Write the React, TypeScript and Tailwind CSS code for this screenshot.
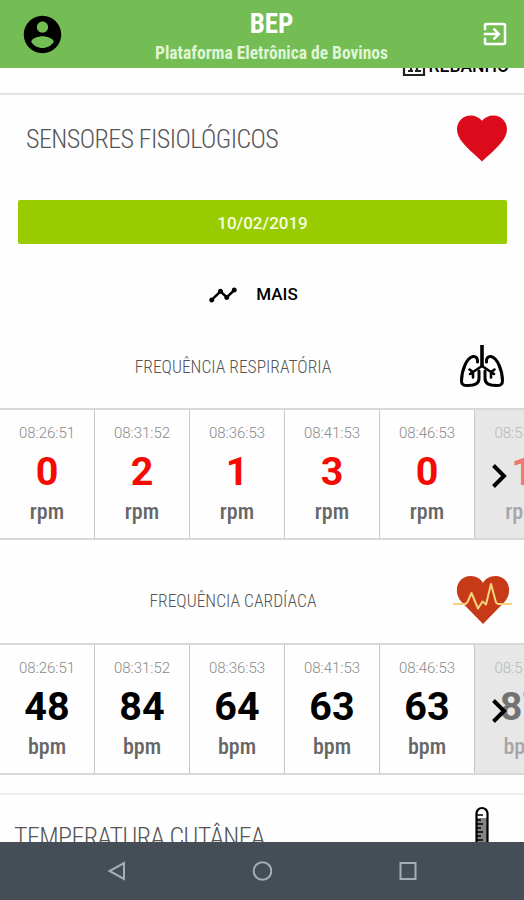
import * as React from 'react';
import { MdExitToApp, MdFavorite, MdTimeline } from 'react-icons/md';

interface Reading {
	time: string;
	value: number;
}

interface ReadingStripProps {
	readings: Reading[];
	unit: string;
	valueClass: string;
}

const respiratory: Reading[] = [
	{ time: '08:26:51', value: 0 },
	{ time: '08:31:52', value: 2 },
	{ time: '08:36:53', value: 1 },
	{ time: '08:41:53', value: 3 },
	{ time: '08:46:53', value: 0 },
	{ time: '08:51:54', value: 1 }
];

const cardiac: Reading[] = [
	{ time: '08:26:51', value: 48 },
	{ time: '08:31:52', value: 84 },
	{ time: '08:36:53', value: 64 },
	{ time: '08:41:53', value: 63 },
	{ time: '08:46:53', value: 63 },
	{ time: '08:51:54', value: 87 }
];

function AccountIcon() {
	return (
		<svg viewBox="0 0 24 24" className="size-[45px] text-black" fill="currentColor">
			<path d="M12 2C6.480 2 2 6.480 2 12s4.480 10 10 10 10-4.480 10-10S17.520 2 12 2zm0 3c1.660 0 3 1.340 3 3s-1.340 3-3 3-3-1.340-3-3 1.340-3 3-3zm0 14.200c-2.500 0-4.710-1.280-6-3.220.03-1.990 4-3.080 6-3.080 1.990 0 5.970 1.090 6 3.080-1.290 1.940-3.500 3.220-6 3.220z" />
		</svg>
	);
}

function LungsIcon() {
	return (
		<svg viewBox="0 0 46 44" className="h-11 w-[46px]" fill="none" stroke="#000" strokeWidth="3" strokeLinecap="round" strokeLinejoin="round">
			<path d="M23 1v21" strokeWidth="3.600" strokeLinecap="butt" />
			<path d="M23 22l-12 8M23 22l12 8M14 28v5.500M14 28l-3.500-2.500M32 28v5.500M32 28l3.500-2.500" strokeWidth="2.600" />
			<path d="M18.500 18c.5-3.500-1.500-6-4.500-5.500C8 13.500 2.500 26 2.500 37c0 4 2.500 4.500 6 4.500 7 0 11.500-2 11.500-7V27" />
			<path d="M27.500 18c-.5-3.500 1.500-6 4.500-5.500C38 13.500 43.500 26 43.500 37c0 4-2.500 4.500-6 4.500-7 0-11.500-2-11.500-7V27" />
		</svg>
	);
}

function HeartRateIcon() {
	return (
		<svg viewBox="0 0 60 52" className="h-[52px] w-[60px]" fill="none">
			<path d="M30 50L8.500 28C-1 17 5 2 17.500 2 23.500 2 28 5 30 9c2-4 6.500-7 12.500-7C55 2 61 17 51.500 28z" fill="#c73a17" />
			<path d="M0 30h12.500l2-2 4-9 6.500 15.500 4.500-7 3.500 3L38 10l5 18.500 2 1.500h14" stroke="#f5d27c" strokeWidth="2" strokeLinejoin="round" />
		</svg>
	);
}

function ThermometerIcon() {
	return (
		<svg viewBox="0 0 16 46" className="h-[46px] w-4" fill="none" stroke="#000" strokeWidth="2.200">
			<path d="M3 12h10v33H3z" fill="#858585" stroke="none" />
			<path d="M2.500 45V7.500a5.500 5.500 0 0 1 11 0V45" />
			<path d="M3 9h6M3 14h4M3 18h6M3 22h4M3 26h6M3 30h4M3 34h6" strokeWidth="1.600" />
		</svg>
	);
}

function ReadingStrip({ readings, unit, valueClass }: ReadingStripProps) {
	return (
		<div className="relative flex h-[132px] overflow-hidden border-y-2 border-[#d8d8d8]">
			{readings.map((reading, index) => (
				<div
					key={reading.time}
					className={`flex w-[95px] shrink-0 flex-col items-center ${index === 5 ? 'bg-[#e7e7e7]' : 'border-r border-[#c8c8c8]'}`}
				>
					<div className={`flex flex-col items-center ${index === 5 ? 'opacity-50' : ''}`}>
						<span className="mt-[13px] font-[Roboto] text-[15px] leading-5 font-light text-[#8a8a8a]">{reading.time}</span>
						<span className={`mt-[8px] font-[Roboto] text-[39.500px] leading-[42px] font-bold ${valueClass}`}>{reading.value}</span>
						<span className="mt-[5px] text-[22px] leading-7 font-medium text-[#666]">{unit}</span>
					</div>
				</div>
			))}
			<svg viewBox="0 0 17 26" className="absolute top-[53px] left-[491px] h-[26px] w-[17px]" fill="none" stroke="#000" strokeWidth="4">
				<path d="M2.500 2.500L13 13 2.500 23.500" />
			</svg>
		</div>
	);
}

export default function App() {
	return (
		<div className="flex h-[900px] w-[524px] flex-col overflow-hidden bg-[#fefefe] font-['Roboto_Condensed',Roboto,sans-serif]">
			<header className="z-10 flex h-[68px] shrink-0 items-center justify-between bg-[#74bd55] pr-[14px] pl-5">
				<AccountIcon />
				<div className="flex flex-col items-center pt-[6px] pr-[2px] text-white">
					<h1 className="text-[27px] leading-[30px] font-bold">BEP</h1>
					<p className="mt-[2px] text-[17.500px] leading-6 font-bold text-[#dff5d5]">Plataforma Eletrônica de Bovinos</p>
				</div>
				<MdExitToApp className="size-[30px] text-white" />
			</header>

			<main className="flex min-h-0 flex-1 flex-col overflow-hidden">
				{/* Bottom edge of the herd button, scrolled under the header */}
				<div className="flex h-[27px] shrink-0 items-end justify-end border-b-2 border-[#e4e4e4] pr-[15px] pb-[17px]">
					<svg viewBox="0 0 24 24" className="mr-[3px] -mb-px size-6 shrink-0" fill="none" stroke="#222" strokeWidth="2.200">
						<path d="M2 2h20v20H2zM6 18h5M9 10v9M13 18h6M15 10v9" />
					</svg>
					<span className="font-[Roboto] text-[17.500px] leading-5 font-medium text-black">REBANHO</span>
				</div>

				<section className="flex shrink-0 flex-col">
					<div className="flex h-[86px] items-center justify-between pr-3 pl-[26px]">
						<h2 className="pt-[3px] text-[26px] font-light tracking-[-0.550px] text-[#555]">SENSORES FISIOLÓGICOS</h2>
						<MdFavorite className="size-[60px] text-[#dc0b1c]" />
					</div>
					<div className="mr-[17px] ml-[18px] mt-[19px] flex h-[44px] items-center justify-center rounded-xs bg-[#98cc00] pt-[3px] font-[Roboto] text-[17px] font-medium text-[#f6fce4]">
						10/02/2019
					</div>
					<button type="button" className="mt-[30px] flex h-10 items-center justify-center gap-[18px] pt-[2px] pr-[18px] font-[Roboto] text-[17px] font-medium text-black">
						<MdTimeline className="size-[30px]" />
						MAIS
					</button>
				</section>

				<section className="flex shrink-0 flex-col">
					<div className="grid h-[94px] grid-cols-[13px_1fr_58px] items-center pr-[13px]">
						<h3 className="col-start-2 pt-[12px] text-center text-[17.500px] font-light text-[#555]">FREQUÊNCIA RESPIRATÓRIA</h3>
						<div className="flex justify-center pt-[9px]">
							<LungsIcon />
						</div>
					</div>
					<ReadingStrip readings={respiratory} unit="rpm" valueClass="text-[#f30b04]" />
				</section>

				<section className="flex shrink-0 flex-col">
					<div className="grid h-[103px] grid-cols-[13px_1fr_58px] items-center pr-[13px]">
						<h3 className="col-start-2 pt-[20px] text-center text-[17.500px] font-light text-[#555]">FREQUÊNCIA CARDÍACA</h3>
						<div className="-mr-px pt-4">
							<HeartRateIcon />
						</div>
					</div>
					<ReadingStrip readings={cardiac} unit="bpm" valueClass="text-black" />
				</section>

				<section className="mt-[18px] flex shrink-0 items-start justify-between border-t-2 border-[#ececec] pr-[34px] pl-[14px]">
					<h2 className="mt-[23px] text-[26px] font-light tracking-[-0.600px] text-[#555]">TEMPERATURA CUTÂNEA</h2>
					<div className="mt-[11px]">
						<ThermometerIcon />
					</div>
				</section>
			</main>

			<nav className="flex h-[58px] shrink-0 items-center justify-center gap-[126px] bg-[#454d57]">
				<svg viewBox="0 0 20 20" className="size-5" fill="none" stroke="#a4adb8" strokeWidth="2">
					<path d="M18 2v16L3.500 10z" />
				</svg>
				<svg viewBox="0 0 20 20" className="size-5" fill="none" stroke="#a4adb8" strokeWidth="2">
					<circle cx="10.500" cy="10" r="8.800" />
				</svg>
				<svg viewBox="0 0 20 20" className="size-5" fill="none" stroke="#a4adb8" strokeWidth="2">
					<path d="M2.500 2h15v16h-15z" />
				</svg>
			</nav>
		</div>
	);
}
